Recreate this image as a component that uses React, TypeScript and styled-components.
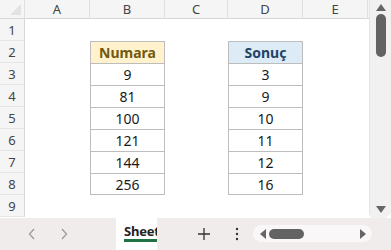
import styled, { createGlobalStyle } from 'styled-components';

const GlobalStyle = createGlobalStyle`
  html, body {
    margin: 0;
    padding: 0;
    background: #fff;
    overflow: hidden;
  }
  * {
    box-sizing: border-box;
  }
`;

const columns = ['A', 'B', 'C', 'D', 'E'];
const numbers = ['9', '81', '100', '121', '144', '256'];
const results = ['3', '9', '10', '11', '12', '16'];

const Workbook = styled.div`
  width: 391px;
  height: 250px;
  display: flex;
  flex-direction: column;
  font-family: 'Noto Sans', 'Open Sans', sans-serif;
  background: #fff;
`;

const SheetArea = styled.div`
  height: 218px;
  display: flex;
  overflow: hidden;
`;

const Grid = styled.div`
  flex: 1;
  display: grid;
  grid-template-columns: 25px 65px 75px 63px 75px 65px 1fr;
  grid-template-rows: 19px repeat(9, 22px);
  overflow: hidden;
`;

const Corner = styled.div`
  background: #f5f5f5;
  border-right: 1px solid #e0e0e0;
  border-bottom: 1px solid #d6d6d6;
  position: relative;
  &::after {
    content: '';
    position: absolute;
    right: 3px;
    bottom: 3px;
    border-style: solid;
    border-width: 0 0 11px 11px;
    border-color: transparent transparent #e2e2e2 transparent;
  }
`;

const ColHeader = styled.div<{ $filler?: boolean }>`
  background: #f5f5f5;
  border-right: ${(p) => (p.$filler ? 'none' : '1px solid #e0e0e0')};
  border-bottom: 1px solid #d6d6d6;
  color: #444;
  font-size: 13px;
  display: flex;
  align-items: center;
  justify-content: center;
`;

const RowHeader = styled.div`
  background: #f5f5f5;
  border-right: 1px solid #d6d6d6;
  border-bottom: 1px solid #e6e6e6;
  color: #444;
  font-size: 13px;
  display: flex;
  align-items: center;
  justify-content: center;
`;

const Cell = styled.div`
  background: #fff;
`;

const DataCell = styled.div<{ $head?: 'yellow' | 'blue'; $last?: boolean }>`
  display: flex;
  align-items: center;
  justify-content: center;
  font-size: 14px;
  border-left: 1px solid #bdbdbd;
  border-right: 1px solid #bdbdbd;
  border-top: 1px solid #bdbdbd;
  border-bottom: ${(p) => (p.$last ? '1px solid #bdbdbd' : 'none')};
  background: ${(p) =>
    p.$head === 'yellow' ? '#fff2cc' : p.$head === 'blue' ? '#ddebf7' : '#fff'};
  font-weight: ${(p) => (p.$head ? 700 : 400)};
  color: ${(p) =>
    p.$head === 'yellow' ? '#735a10' : p.$head === 'blue' ? '#1f4466' : '#1a1a1a'};
`;

const VScroll = styled.div`
  width: 22px;
  background: #f1f1f1;
  border-left: 1px solid #e4e4e4;
  border-bottom-left-radius: 6px;
  border-bottom-right-radius: 8px;
  display: flex;
  flex-direction: column;
  align-items: center;
  padding: 4px 0 5px;
`;

const Arrow = styled.div<{ $dir: 'up' | 'down' | 'left' | 'right' }>`
  width: 0;
  height: 0;
  border-style: solid;
  ${(p) =>
    p.$dir === 'up'
      ? 'border-width: 0 5px 7px 5px; border-color: transparent transparent #666 transparent;'
      : p.$dir === 'down'
      ? 'border-width: 7px 5px 0 5px; border-color: #666 transparent transparent transparent;'
      : p.$dir === 'left'
      ? 'border-width: 5px 6px 5px 0; border-color: transparent #666 transparent transparent;'
      : 'border-width: 5px 0 5px 6px; border-color: transparent transparent transparent #666;'}
`;

const VThumb = styled.div`
  width: 10px;
  height: 43px;
  margin-top: 3px;
  border-radius: 5px;
  background: #636363;
`;

const Spacer = styled.div`
  flex: 1;
`;

const TabBar = styled.div`
  flex: 1;
  display: flex;
  align-items: stretch;
  background: #f0ecec;
  padding-left: 16px;
`;

const NavButton = styled.div`
  width: 32px;
  display: flex;
  align-items: center;
  justify-content: center;
`;

const SheetTab = styled.div`
  margin-left: 36px;
  width: 41px;
  background: #fff;
  overflow: hidden;
  position: relative;
  padding: 4px 0 0 8px;
  font-size: 13px;
  letter-spacing: -0.2px;
  font-weight: 700;
  color: #222;
  white-space: nowrap;
  &::after {
    content: '';
    position: absolute;
    left: 8px;
    right: 0;
    top: 21px;
    height: 3px;
    background: #1f7244;
  }
`;

const IconButton = styled.div<{ $w: number; $gap: number }>`
  width: ${(p) => p.$w}px;
  margin-left: ${(p) => p.$gap}px;
  display: flex;
  align-items: center;
  justify-content: center;
`;

const HScroll = styled.div`
  margin: 7px 0 8px 10px;
  width: 119px;
  border-radius: 9px;
  background: #f9f7f7;
  display: flex;
  align-items: center;
  padding: 0 6px 0 7px;
  gap: 3px;
`;

const HThumb = styled.div`
  width: 35px;
  height: 10px;
  border-radius: 5px;
  background: #636363;
`;

export default function App() {
  return (
    <Workbook>
      <GlobalStyle />
      <SheetArea>
        <Grid>
          <Corner />
          {columns.map((c) => (
            <ColHeader key={c}>{c}</ColHeader>
          ))}
          <ColHeader $filler />
          {Array.from({ length: 9 }, (_, i) => {
            const row = i + 1;
            const idx = row - 3;
            return [
              <RowHeader key={`h${row}`}>{row}</RowHeader>,
              <Cell key={`a${row}`} />,
              row === 2 ? (
                <DataCell key={`b${row}`} $head="yellow">
                  Numara
                </DataCell>
              ) : idx >= 0 && idx < numbers.length ? (
                <DataCell key={`b${row}`} $last={idx === numbers.length - 1}>
                  {numbers[idx]}
                </DataCell>
              ) : (
                <Cell key={`b${row}`} />
              ),
              <Cell key={`c${row}`} />,
              row === 2 ? (
                <DataCell key={`d${row}`} $head="blue">
                  Sonuç
                </DataCell>
              ) : idx >= 0 && idx < results.length ? (
                <DataCell key={`d${row}`} $last={idx === results.length - 1}>
                  {results[idx]}
                </DataCell>
              ) : (
                <Cell key={`d${row}`} />
              ),
              <Cell key={`e${row}`} />,
              <Cell key={`f${row}`} />,
            ];
          })}
        </Grid>
        <VScroll>
          <Arrow $dir="up" />
          <VThumb />
          <Spacer />
          <Arrow $dir="down" />
        </VScroll>
      </SheetArea>
      <TabBar>
        <NavButton>
          <svg width="8" height="12" viewBox="0 0 8 12">
            <path d="M6 1 L1.5 6 L6 11" fill="none" stroke="#9a9a9a" strokeWidth="1.3" />
          </svg>
        </NavButton>
        <NavButton>
          <svg width="8" height="12" viewBox="0 0 8 12">
            <path d="M2 1 L6.5 6 L2 11" fill="none" stroke="#9a9a9a" strokeWidth="1.3" />
          </svg>
        </NavButton>
        <SheetTab>Sheet1</SheetTab>
        <IconButton $w={30} $gap={32}>
          <svg width="14" height="14" viewBox="0 0 14 14">
            <path d="M7 1 V13 M1 7 H13" stroke="#333" strokeWidth="1.3" />
          </svg>
        </IconButton>
        <IconButton $w={12} $gap={12}>
          <svg width="4" height="14" viewBox="0 0 4 14">
            <circle cx="2" cy="2" r="1.2" fill="#333" />
            <circle cx="2" cy="7" r="1.2" fill="#333" />
            <circle cx="2" cy="12" r="1.2" fill="#333" />
          </svg>
        </IconButton>
        <HScroll>
          <Arrow $dir="left" />
          <HThumb />
          <Spacer />
          <Arrow $dir="right" />
        </HScroll>
      </TabBar>
    </Workbook>
  );
}
